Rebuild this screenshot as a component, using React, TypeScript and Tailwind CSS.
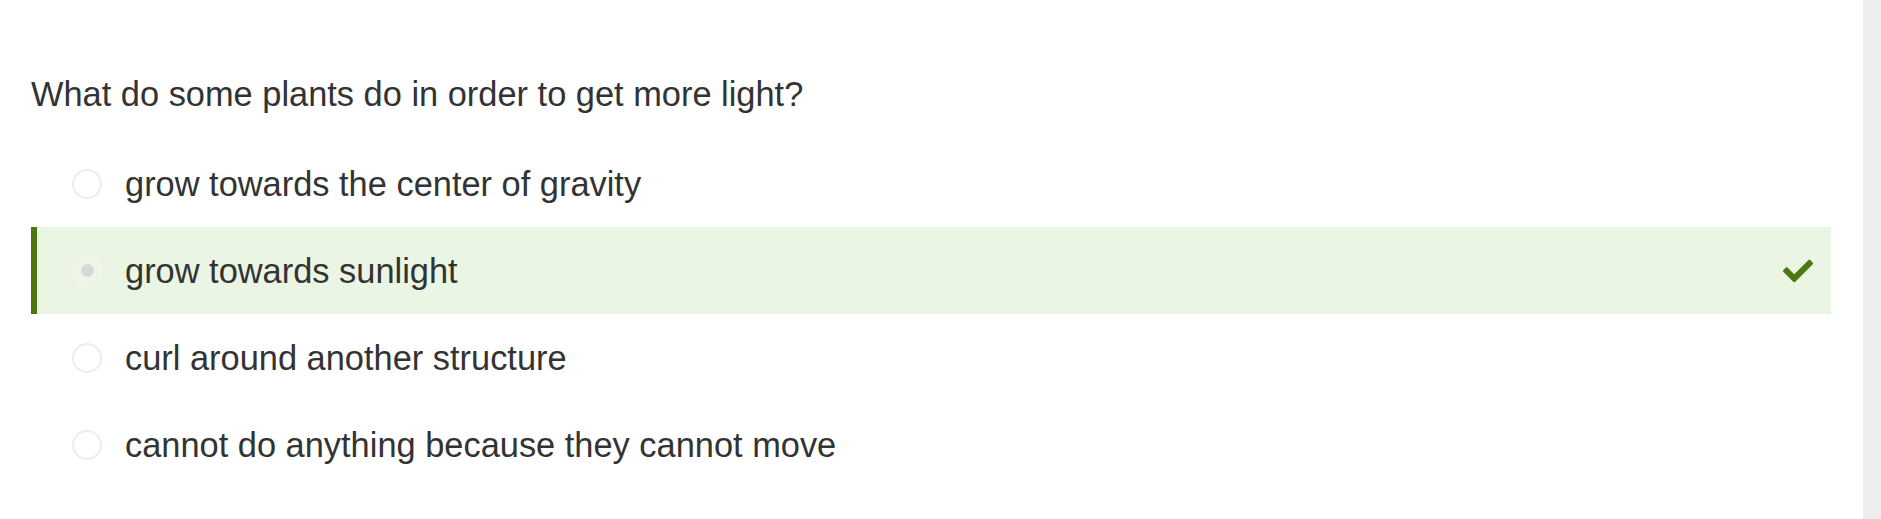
import { FaCheck } from 'react-icons/fa';

const options = [
  { text: 'grow towards the center of gravity', correct: false },
  { text: 'grow towards sunlight', correct: true },
  { text: 'curl around another structure', correct: false },
  { text: 'cannot do anything because they cannot move', correct: false },
];

export default function App() {
  return (
    <div className="flex min-h-[519px] w-full bg-white font-['Liberation_Sans',Arial,sans-serif] text-[#333333]">
      <div className="flex-1 pl-[31px] pr-[32px]">
        <h1 className="pt-[76px] text-[34.4px] leading-[36px] font-normal">
          What do some plants do in order to get more light?
        </h1>

        <ul className="mt-[28px]">
          {options.map((opt) =>
            opt.correct ? (
              <li
                key={opt.text}
                className="flex h-[87px] items-center border-l-[6px] border-[#4b790f] bg-[#ebf5e4] pr-[18px]"
              >
                <span className="ml-[35px] flex h-[30px] w-[30px] items-center justify-center rounded-full bg-[#eef6ea]">
                  <span className="h-[13px] w-[13px] rounded-full bg-[#d8d9d6]" />
                </span>
                <span className="ml-[23px] flex-1 text-[34.4px] leading-[36px]">{opt.text}</span>
                <FaCheck className="h-[30px] w-[30px] text-[#4b790f]" />
              </li>
            ) : (
              <li key={opt.text} className="flex h-[87px] items-center pl-[6px]">
                <span className="ml-[35px] h-[30px] w-[30px] rounded-full border-2 border-[#ececec]" />
                <span className="ml-[23px] text-[34.4px] leading-[36px]">{opt.text}</span>
              </li>
            )
          )}
        </ul>
      </div>
      <div className="w-[18px] shrink-0 bg-[#eeeeee]" />
    </div>
  );
}
